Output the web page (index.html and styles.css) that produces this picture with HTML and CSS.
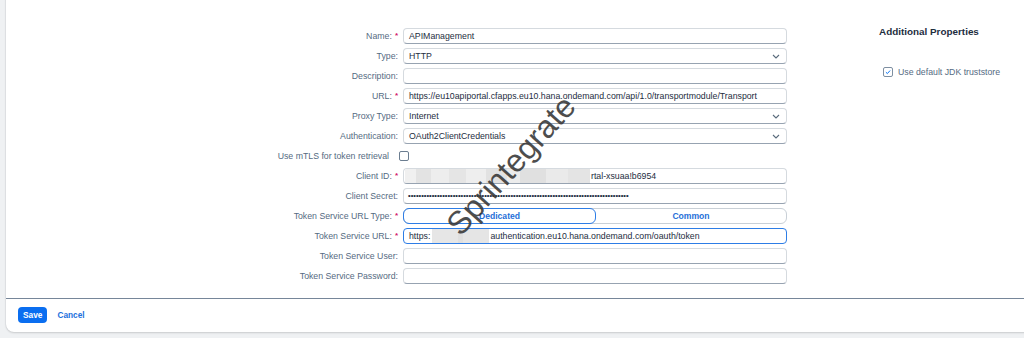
FILE: index.html
```html
<!DOCTYPE html>
<html lang="en">
<head>
<meta charset="utf-8">
<title>Destination</title>
<link rel="stylesheet" href="styles.css">
</head>
<body>
<div class="card">
  <div class="main">
    <div class="form">
      <div class="lbl">Name:<span class="req">*</span></div>
      <div class="field"><span class="val">APIManagement</span></div>

      <div class="lbl">Type:</div>
      <div class="field select"><span class="val">HTTP</span><svg class="chev" viewBox="0 0 8 5" width="8" height="5"><path d="M1 1 L4 4 L7 1" /></svg></div>

      <div class="lbl">Description:</div>
      <div class="field"></div>

      <div class="lbl">URL:<span class="req">*</span></div>
      <div class="field"><span class="val">https://eu10apiportal.cfapps.eu10.hana.ondemand.com/api/1.0/transportmodule/Transport</span></div>

      <div class="lbl">Proxy Type:</div>
      <div class="field select"><span class="val">Internet</span><svg class="chev" viewBox="0 0 8 5" width="8" height="5"><path d="M1 1 L4 4 L7 1" /></svg></div>

      <div class="lbl">Authentication:</div>
      <div class="field select"><span class="val">OAuth2ClientCredentials</span><svg class="chev" viewBox="0 0 8 5" width="8" height="5"><path d="M1 1 L4 4 L7 1" /></svg></div>

      <div class="lbl lbl-mtls">Use mTLS for token retrieval</div>
      <div class="cbcell"><span class="cb"></span></div>

      <div class="lbl">Client ID:<span class="req">*</span></div>
      <div class="field"><span class="blur blur-id"></span><span class="val tight">rtal-xsuaa!b6954</span></div>

      <div class="lbl">Client Secret:</div>
      <div class="field"><span class="val dots">••••••••••••••••••••••••••••••••••••••••••••••••••••••••••••••••••••••••••••••••••••</span></div>

      <div class="lbl">Token Service URL Type:<span class="req">*</span></div>
      <div class="seg"><span class="seg-btn active">Dedicated</span><span class="seg-btn">Common</span></div>

      <div class="lbl">Token Service URL:<span class="req">*</span></div>
      <div class="field focus"><span class="val">https:</span><span class="blur blur-url"></span><span class="val tight">authentication.eu10.hana.ondemand.com/oauth/token</span></div>

      <div class="lbl">Token Service User:</div>
      <div class="field"></div>

      <div class="lbl">Token Service Password:</div>
      <div class="field"></div>
    </div>

    <div class="side">
      <div class="side-title">Additional Properties</div>
      <div class="side-check">
        <span class="cb checked"><svg viewBox="0 0 10 10" width="10" height="10"><path d="M2.4 5.2 L4.2 7 L7.6 3.2" /></svg></span>
        <span class="side-label">Use default JDK truststore</span>
      </div>
    </div>

    <div class="wm">Sprintegrate</div>
  </div>

  <div class="footer">
    <button class="btn-save">Save</button>
    <button class="btn-cancel">Cancel</button>
  </div>
</div>
</body>
</html>
```

FILE: styles.css
```css
html, body {
  margin: 0;
  padding: 0;
  overflow: hidden;
}
body {
  background: #eff1f3;
  font-family: "Liberation Sans", Arial, sans-serif;
  font-size: 8.75px;
  color: #1d2d3e;
  width: 1024px;
  height: 338px;
}
.card {
  background: #ffffff;
  margin: -10px -20px 0 6px;
  border-radius: 0 0 8px 8px;
  box-shadow: 0 1px 2px rgba(0, 0, 0, 0.16), -1px 0 0 #e6e9ec;
  height: 342px;
  display: flex;
  flex-direction: column;
}
.main {
  position: relative;
  display: flex;
  padding-top: 38px;
  height: 270px;
  border-bottom: 1px solid #768699;
}
.form {
  display: grid;
  grid-template-columns: 392px 384px;
  grid-auto-rows: 16px;
  column-gap: 5px;
  row-gap: 4px;
  align-items: center;
  align-content: start;
}
.lbl {
  text-align: right;
  color: #556b82;
  white-space: nowrap;
  line-height: 16px;
}
.req {
  color: #d3176b;
  font-weight: bold;
  margin-left: 3px;
  font-size: 8px;
  position: relative;
  top: -1px;
}
.lbl-mtls {
  padding-right: 9px;
}
.cbcell {
  height: 16px;
  display: flex;
  align-items: center;
}
.cbcell .cb {
  margin-left: -4px;
}
.cb {
  width: 8px;
  height: 8px;
  border: 1px solid #6b7d90;
  border-radius: 2px;
  display: inline-flex;
  align-items: center;
  justify-content: center;
  background: #fff;
}
.cb svg {
  display: block;
}
.cb svg path {
  fill: none;
  stroke: #0070f2;
  stroke-width: 1.2;
}
.field {
  height: 14px;
  box-sizing: content-box;
  border: 1px solid #d5dadf;
  border-bottom-color: #97a3b1;
  border-radius: 4px;
  background: #fff;
  display: flex;
  align-items: center;
  padding-left: 5px;
  position: relative;
  overflow: hidden;
  color: #1d2d3e;
  white-space: nowrap;
}
.field.focus {
  border-color: #2d7de6;
}
.val {
  line-height: 14px;
}
.select .chev {
  position: absolute;
  right: 6px;
  top: 5px;
}
.chev path {
  fill: none;
  stroke: #5b6c7d;
  stroke-width: 1.1;
}
.blur {
  display: block;
  height: 14px;
  flex: none;
}
.blur-id {
  margin-left: -4px;
  width: 185px;
  background: linear-gradient(90deg, #f0f0f0 0 6%, #e3e3e3 6% 14%, #ededed 14% 24%, #e5e5e5 24% 33%, #eeeeee 33% 44%, #e2e2e2 44% 55%, #ececec 55% 62%, #e0e0e0 62% 76%, #eaeaea 76% 88%, #e4e4e4 88% 100%);
}
.blur-url {
  width: 57px;
  margin-left: 2px;
  background: linear-gradient(90deg, #e6e6e6 0 45%, #dfdfdf 45% 55%, #e5e5e5 55% 100%);
}
.tight {
  margin-left: 1px;
}
.dots {
  font-size: 7.5px;
  font-weight: bold;
  color: #1d2d3e;
  margin-left: -1px;
}
.seg {
  display: flex;
  height: 16px;
  border: 1px solid #c9d0d7;
  border-radius: 6px;
  box-sizing: border-box;
}
.seg-btn {
  flex: 1;
  display: flex;
  align-items: center;
  justify-content: center;
  color: #1f6fd8;
  font-weight: bold;
  font-size: 8.6px;
}
.seg-btn.active {
  flex: 0 0 191px;
  border: 1px solid #2d7de6;
  border-radius: 6px;
  margin: -1px 0 -1px -1px;
}
.side {
  margin-left: 92px;
}
.side-title {
  font-weight: bold;
  font-size: 9.9px;
  color: #1d2d3e;
  line-height: 12px;
  margin-top: -2px;
}
.side-check {
  display: flex;
  align-items: center;
  margin-top: 29px;
  margin-left: 4px;
}
.side-check .cb {
  border-color: #7e8fa1;
}
.side-label {
  margin-left: 5px;
  color: #556b82;
}
.wm {
  position: absolute;
  left: 418px;
  top: 157px;
  font-family: "Liberation Sans", Arial, sans-serif;
  font-size: 32px;
  color: #3a3a3a;
  opacity: 0.9;
  transform: rotate(-48deg);
  transform-origin: center center;
  white-space: nowrap;
  pointer-events: none;
}
.footer {
  display: flex;
  align-items: center;
  gap: 10px;
  padding: 8px 0 0 12px;
}
.btn-save {
  background: #0a6ef0;
  color: #fff;
  border: none;
  border-radius: 4px;
  height: 16px;
  padding: 0 5px;
  font-family: "Liberation Sans", Arial, sans-serif;
  font-weight: bold;
  font-size: 8.3px;
}
.btn-cancel {
  background: none;
  border: none;
  padding: 0;
  color: #1a6fdc;
  font-family: "Liberation Sans", Arial, sans-serif;
  font-weight: bold;
  font-size: 8.3px;
}
```
